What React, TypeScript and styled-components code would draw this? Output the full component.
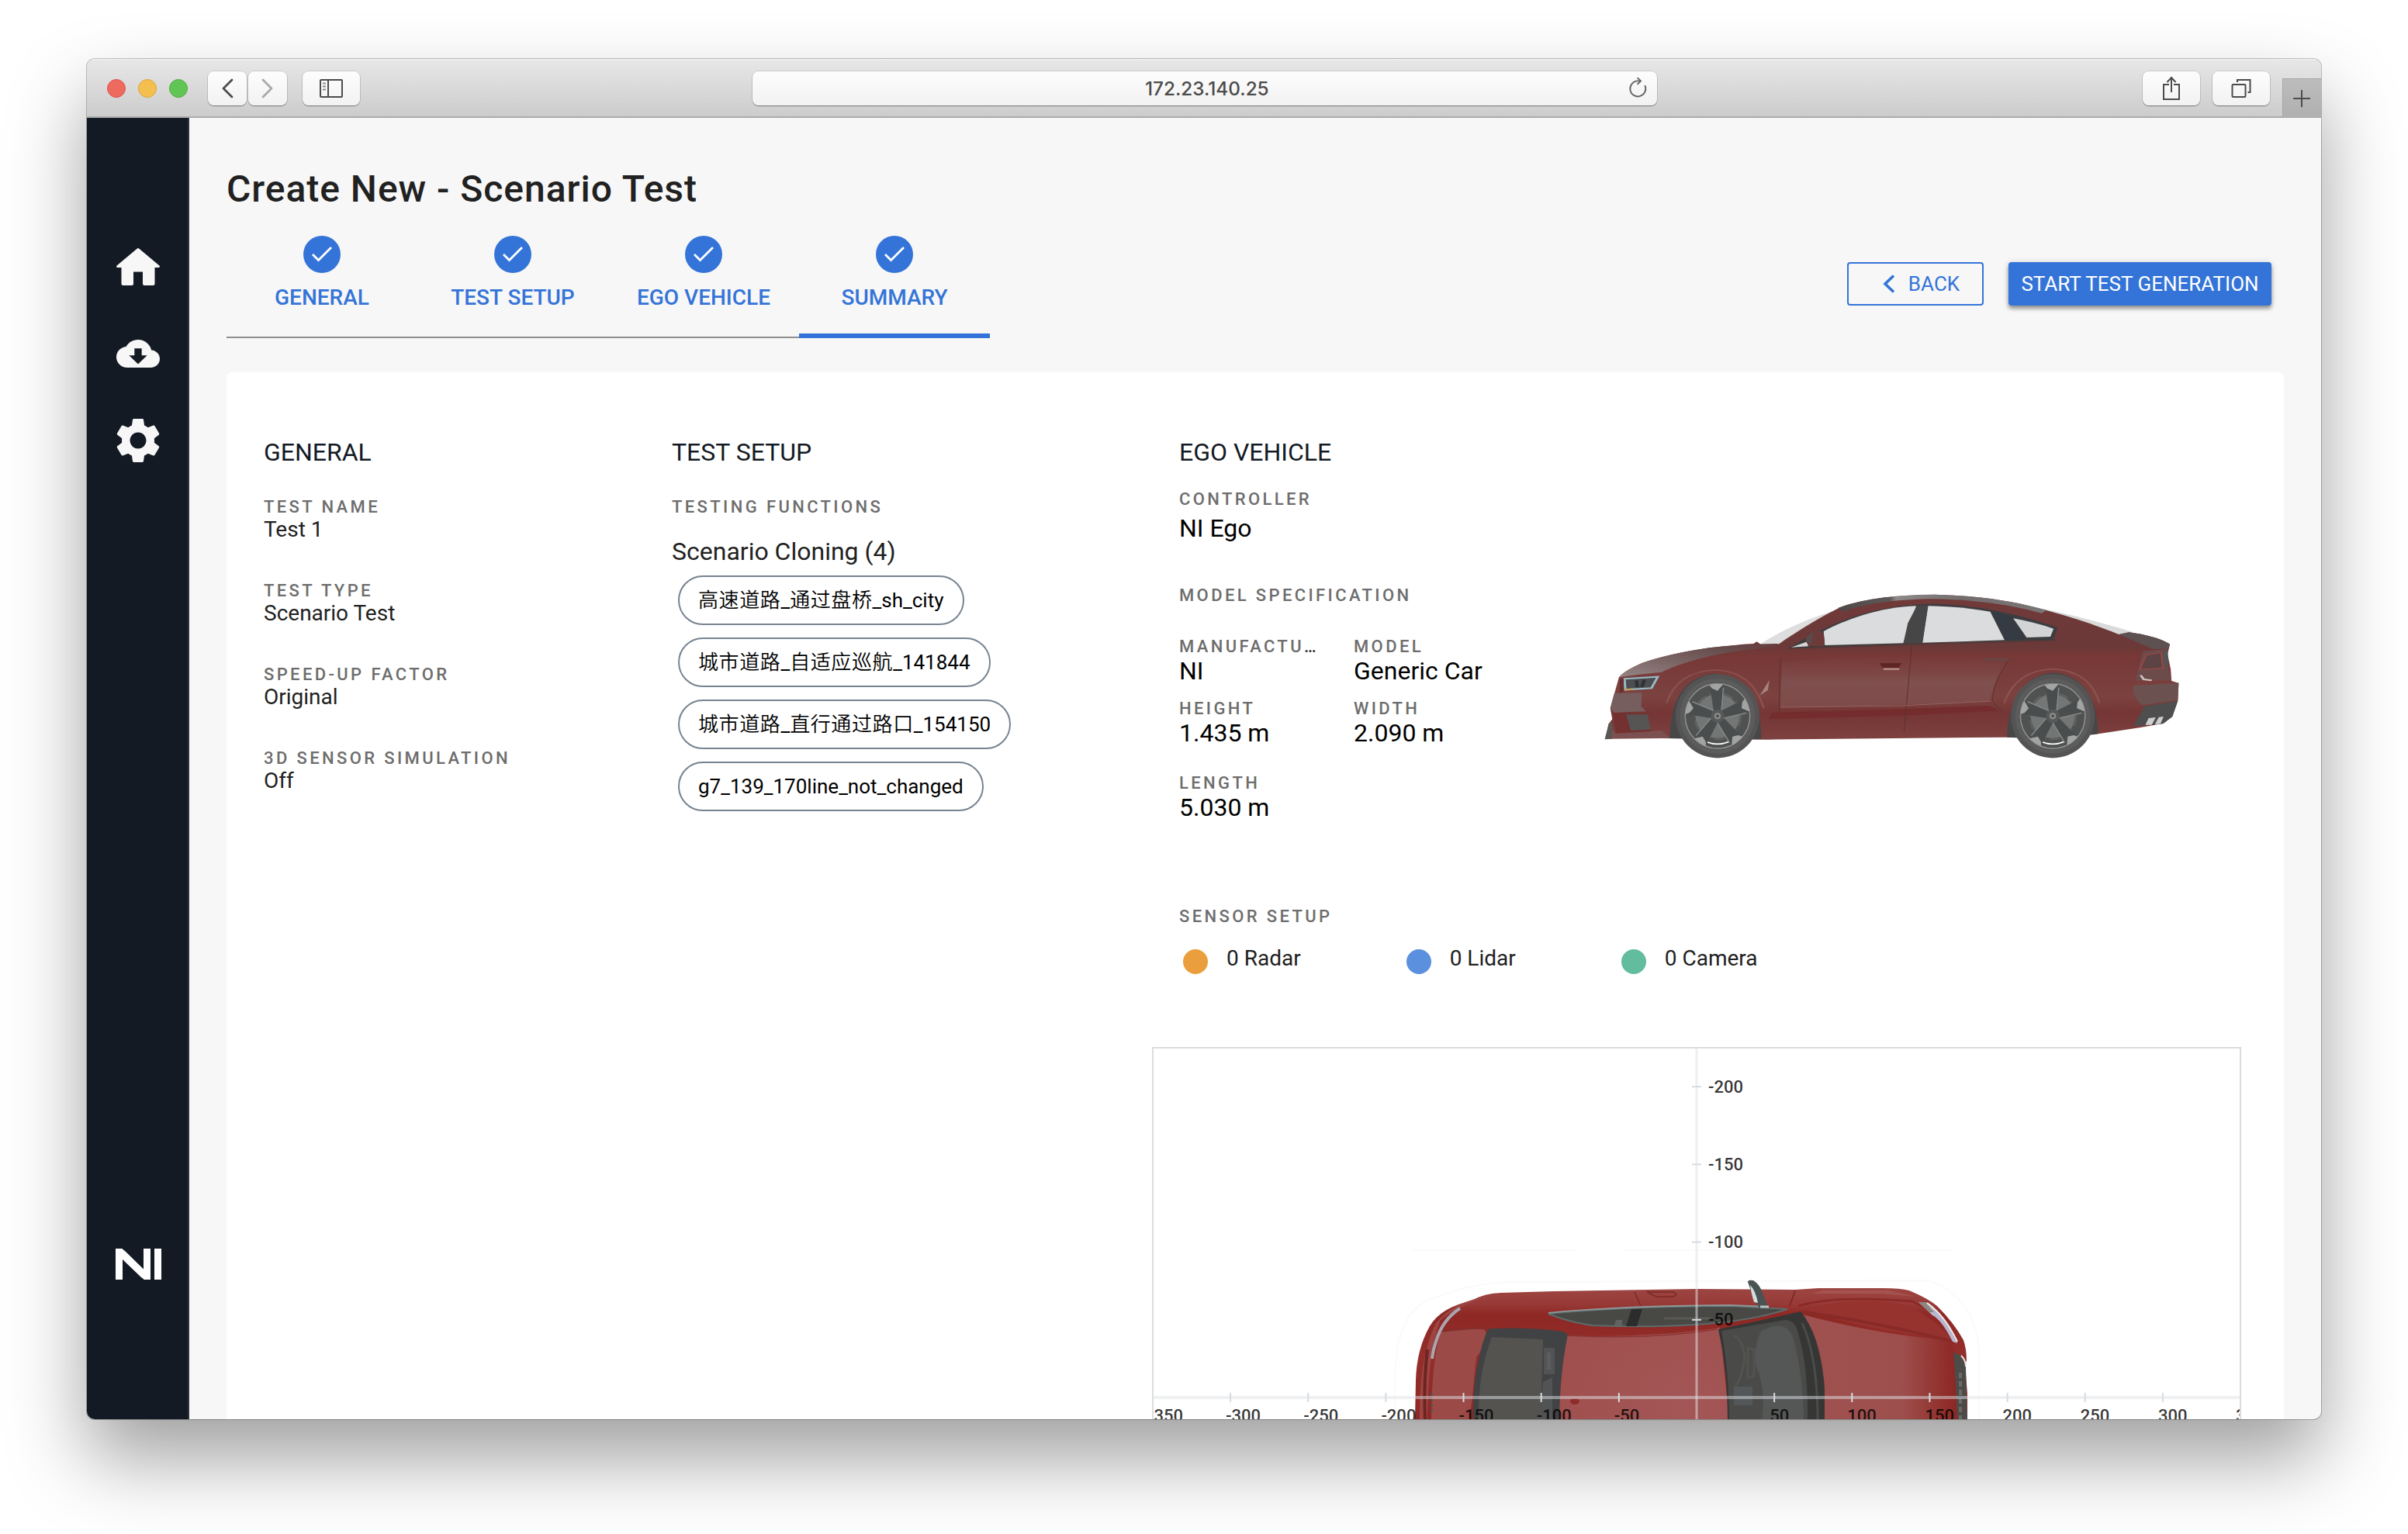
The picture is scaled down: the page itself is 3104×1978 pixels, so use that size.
import React from "react";
import styled, { createGlobalStyle } from "styled-components";

const BLUE = "#3474d8";
const NAVY = "#131a24";

const GlobalStyle = createGlobalStyle`
  * { box-sizing: border-box; }
  body {
    margin: 0;
    background: #fff;
    font-family: Roboto, "Noto Sans CJK SC", sans-serif;
    color: #212121;
  }
`;

const Desktop = styled.div`
  width: 3104px;
  height: 1978px;
  padding: 76px 112px 0;
  overflow: hidden;
`;

const Window = styled.div`
  display: flex;
  flex-direction: column;
  width: 2880px;
  height: 1754px;
  border-radius: 10px;
  overflow: hidden;
  background: #f7f7f7;
  box-shadow: 0 0 0 1px rgba(0, 0, 0, 0.24), 0 50px 100px rgba(0, 0, 0, 0.38);
`;

/* ---------- browser toolbar ---------- */

const Toolbar = styled.div`
  display: flex;
  align-items: flex-start;
  flex: none;
  height: 76px;
  padding: 15px 0 0 26px;
  background: linear-gradient(#e7e7e7, #cccccc);
  border-top: 1px solid #f4f4f4;
  border-bottom: 2px solid #a9a9a9;
`;

const Lights = styled.div`
  display: flex;
  gap: 16px;
  margin: 10px 26px 0 0;
`;

const Light = styled.span<{ $fill: string; $edge: string }>`
  width: 24px;
  height: 24px;
  border-radius: 50%;
  background: ${(p) => p.$fill};
  border: 1px solid ${(p) => p.$edge};
`;

const ToolButton = styled.button<{ $w: number; $gap: number }>`
  display: flex;
  align-items: center;
  justify-content: center;
  flex: none;
  width: ${(p) => p.$w}px;
  height: 44px;
  margin: 0 ${(p) => p.$gap}px 0 0;
  padding: 0;
  border: 0;
  border-radius: 8px;
  background: linear-gradient(#fdfdfd, #f2f2f2);
  box-shadow: 0 0 0 1px rgba(0, 0, 0, 0.1), 0 1px 1px rgba(0, 0, 0, 0.38);
`;

const AddressBar = styled.div`
  display: flex;
  align-items: center;
  justify-content: space-between;
  flex: none;
  width: 1166px;
  height: 44px;
  margin: 0 626px 0 506px;
  padding: 0 11px 0 506px;
  border-radius: 8px;
  background: linear-gradient(#fdfdfd, #f2f2f2);
  box-shadow: 0 0 0 1px rgba(0, 0, 0, 0.1), 0 1px 1px rgba(0, 0, 0, 0.38);
  color: #4b4b4b;
  font: 500 24.3px/46px Inter, sans-serif;
`;

const NewTab = styled.div`
  display: flex;
  align-items: center;
  justify-content: center;
  flex: none;
  width: 50px;
  height: 50px;
  margin-top: 9px;
  padding-right: 1px;
  background: linear-gradient(#bcbcbc, #b0b0b0);
  border: solid #a6a6a6;
  border-width: 1px 0 0 1px;
`;

/* ---------- application shell ---------- */

const Shell = styled.div`
  display: flex;
  flex: 1;
  min-height: 0;
`;

const Sidebar = styled.nav`
  display: flex;
  flex-direction: column;
  align-items: center;
  width: 132px;
  padding: 168px 0 180px 2px;
  background: ${NAVY};
  border-right: 2px solid #2d323d;
`;

const NavIcon = styled.svg<{ $h: number; $gap: number }>`
  display: block;
  flex: none;
  width: 56px;
  height: ${(p) => p.$h}px;
  margin-bottom: ${(p) => p.$gap}px;
  fill: #f7f7f7;
`;

const Logo = styled.svg`
  width: 59px;
  height: 40px;
  margin-top: auto;
  fill: #fff;
`;

const Main = styled.main`
  display: flex;
  flex-direction: column;
  flex: 1;
  padding: 64px 48px 0;
`;

const Title = styled.h1`
  margin: 0;
  font-size: 48px;
  line-height: 56px;
  font-weight: 500;
  letter-spacing: 0.97px;
`;

const Header = styled.div`
  display: flex;
  align-items: flex-start;
  justify-content: space-between;
  margin-top: 32px;
`;

const Stepper = styled.ol`
  display: flex;
  width: 984px;
  margin: 0;
  padding: 0;
  list-style: none;
`;

const Step = styled.li<{ $active?: boolean }>`
  display: flex;
  flex-direction: column;
  align-items: center;
  width: 246px;
  height: 132px;
  border-bottom: ${(p) => (p.$active ? `6px solid ${BLUE}` : "2px solid #8f8f8f")};
`;

const StepBadge = styled.span`
  display: flex;
  align-items: center;
  justify-content: center;
  width: 48px;
  height: 48px;
  border-radius: 50%;
  background: ${BLUE};
`;

const StepLabel = styled.span`
  margin-top: 16px;
  font-size: 28px;
  line-height: 32px;
  font-weight: 500;
  color: ${BLUE};
`;

const Actions = styled.div`
  display: flex;
  gap: 32px;
  margin: 34px 16px 0 0;
`;

const Button = styled.button<{ $solid?: boolean; $w: number }>`
  display: flex;
  align-items: center;
  justify-content: center;
  gap: 17px;
  width: ${(p) => p.$w}px;
  height: 56px;
  padding: ${(p) => (p.$solid ? "0" : "0 0 0 15px")};
  border: 2px solid ${BLUE};
  border-radius: 4px;
  background: ${(p) => (p.$solid ? BLUE : "transparent")};
  color: ${(p) => (p.$solid ? "#fff" : BLUE)};
  box-shadow: ${(p) => (p.$solid ? "0 4px 5px rgba(0, 0, 0, 0.34), 0 1px 8px rgba(0, 0, 0, 0.16)" : "none")};
  font: 400 26px/30px Roboto, sans-serif;
  white-space: nowrap;
`;

const Card = styled.section`
  display: grid;
  grid-template-columns: 526px 619px 1404px;
  flex: 1;
  margin-top: 44px;
  padding: 83px 0 0 48px;
  background: #fff;
  border-radius: 6px 6px 0 0;
`;

const Column = styled.div<{ $inset?: number }>`
  display: flex;
  flex-direction: column;
  padding-left: ${(p) => p.$inset ?? 0}px;
`;

const SectionTitle = styled.h2`
  margin: 0;
  font-size: 32px;
  line-height: 40px;
  font-weight: 400;
  color: ${NAVY};
`;

const Fields = styled.div`
  display: flex;
  flex-direction: column;
  gap: 51px;
  margin-top: 38px;
`;

const Caption = styled.div<{ $top?: number }>`
  margin-top: ${(p) => p.$top ?? 0}px;
  overflow: hidden;
  text-overflow: ellipsis;
  white-space: nowrap;
  font-size: 22px;
  line-height: 26px;
  font-weight: 500;
  letter-spacing: 3.38px;
  color: #1c1c1c;

  span {
    color: #6d6d6d;
  }
`;

const Value = styled.div`
  font-size: 28px;
  line-height: 31px;
`;

const GroupName = styled.div`
  margin-top: 24px;
  font-size: 32px;
  line-height: 40px;
`;

const Chips = styled.div`
  display: flex;
  flex-direction: column;
  align-items: flex-start;
  gap: 16px;
  margin: 11px 0 0 8px;
`;

const Chip = styled.span`
  height: 64px;
  padding: 0 24px;
  border: 2px solid #778391;
  border-radius: 32px;
  font-size: 26px;
  line-height: 60px;
  color: #000;
  white-space: nowrap;
`;

const Han = styled.span`
  font-weight: 350;
  letter-spacing: 0.6px;
`;

const VehicleRow = styled.div`
  display: flex;
  align-items: flex-start;
`;

const Specs = styled.div`
  width: 520px;
`;

const SpecValue = styled.div<{ $lh?: number }>`
  font-size: 32px;
  line-height: ${(p) => p.$lh ?? 36}px;
  color: #000;
`;

const SpecRow = styled.div<{ $top: number }>`
  display: grid;
  grid-template-columns: 225px 225px;
  margin-top: ${(p) => p.$top}px;
`;

const SpecCell = styled.div`
  padding-right: 40px;
  min-width: 0;
`;

const CarSide = styled.svg`
  display: block;
  flex: none;
  width: 800px;
  height: 260px;
  margin-top: 137px;
`;

const Sensors = styled.div`
  display: flex;
  gap: 136px;
  height: 36px;
  margin: 25px 0 94px 5px;
`;

const Sensor = styled.div`
  display: flex;
  gap: 24px;
  font-size: 28px;
  line-height: 32px;
  white-space: nowrap;
`;

const Dot = styled.span<{ $c: string }>`
  width: 32px;
  height: 32px;
  margin-top: 4px;
  border-radius: 50%;
  background: ${(p) => p.$c};
`;

const Chart = styled.svg`
  display: block;
  width: 1404px;
  height: 480px;
  border: solid #dbdddd;
  border-width: 2px 2px 0;
`;

/* ---------- drawings ---------- */

const WHEEL_ANGLES = [0, 72, 144, 216, 288];

function Wheel({ cx }: { cx: number }) {
  return (
    <g transform={`translate(${cx} 550) scale(1 1.53)`}>
      <circle r="106" fill="#545454" />
      <circle r="95" fill="#5c5c5c" />
      <circle r="85" fill="#505151" />
      <circle r="82" fill="none" stroke="#929292" strokeWidth="3" />
      <circle r="56" fill="#747575" />
      <circle r="58" fill="none" stroke="#5f6060" strokeWidth="6" strokeDasharray="26 10" />
      <path d="M-34 60Q0 78 34 60L28 67Q0 78-28 67Z" fill="#fff" />
      {WHEEL_ANGLES.map((a) => (
        <g key={a} transform={`rotate(${a})`}>
          <path d="M-9-8L-20-79Q-4-84 15-81L10-8Z" fill="#4a4d4d" />
          <path d="M-21-79Q-4-84 15-81L0-64L-14-70Z" fill="#a2a3a3" />
          <path d="M10-14L15-72" stroke="#868888" strokeWidth="3" />
        </g>
      ))}
      <circle r="17" fill="#585a5a" />
      <circle r="8" fill="#8d8e8e" />
      <circle r="4" fill="#505252" />
    </g>
  );
}

function SideView() {
  return (
    <CarSide viewBox="0 0 1568 780" preserveAspectRatio="none">
      <defs>
        <linearGradient id="paint" x1="0" y1="0" x2="0" y2="1">
          <stop offset="0" stopColor="#713a39" />
          <stop offset="0.36" stopColor="#6b3938" />
          <stop offset="0.42" stopColor="#773836" />
          <stop offset="0.7" stopColor="#7b4240" />
          <stop offset="0.82" stopColor="#753635" />
          <stop offset="1" stopColor="#7d4140" />
        </linearGradient>
        <linearGradient id="door" x1="0" y1="0" x2="0" y2="1">
          <stop offset="0" stopColor="#7b4241" stopOpacity="0.2" />
          <stop offset="0.5" stopColor="#7f504f" />
          <stop offset="1" stopColor="#7d4b4a" />
        </linearGradient>
        <linearGradient id="hood" x1="0" y1="1" x2="1" y2="0">
          <stop offset="0" stopColor="#958484" />
          <stop offset="0.4" stopColor="#7b6564" />
          <stop offset="0.75" stopColor="#664c4c" />
          <stop offset="1" stopColor="#693c3c" />
        </linearGradient>
        <linearGradient id="roof" x1="0" y1="0" x2="1" y2="0">
          <stop offset="0" stopColor="#4f4848" />
          <stop offset="0.25" stopColor="#5e5757" />
          <stop offset="0.28" stopColor="#8f8a8a" />
          <stop offset="0.6" stopColor="#736d6d" />
          <stop offset="1" stopColor="#7b7676" />
        </linearGradient>
      </defs>
      <path d="M448 272C500 222 570 170 650 136L664 148C600 185 550 225 500 275Z" fill="#dedede" />
      <path d="M1165 136C1240 160 1320 192 1392 226L1350 240C1290 205 1230 180 1160 152Z" fill="#dadada" />
      <path
        d="M58 638L66 580L75 562L70 520L80 465L92 400Q105 375 150 345Q220 308 320 286Q400 272 432 270L440 262L450 272L495 272C550 215 600 168 650 130C700 100 780 82 890 80C1000 84 1090 104 1170 140C1240 168 1310 205 1355 234L1380 226Q1450 240 1484 272L1478 310L1486 370L1488 414L1506 422L1504 490L1490 552L1468 578L1410 594L1290 622L1070 632L470 641L200 636Z"
        fill="url(#paint)"
      />
      <path d="M92 400Q105 375 150 345Q220 308 320 286Q400 272 495 270L488 282Q380 296 300 326Q230 355 200 380Q140 388 92 400Z" fill="url(#hood)" />
      <path d="M645 132C700 100 780 80 890 80C1000 84 1090 104 1172 140L1160 152C1080 118 990 100 890 97C790 98 710 115 662 146Z" fill="url(#roof)" />
      <path d="M1355 234L1380 226Q1450 240 1484 272L1478 290L1440 290Q1400 262 1355 234Z" fill="#5d5151" />
      <path d="M504 340Q650 318 828 324Q950 316 1078 330Q1040 400 1030 490Q900 508 500 516Z" fill="url(#door)" />
      <path d="M480 536L810 522L1020 510Q1040 512 1050 530L810 548L470 562Z" fill="#742d2c" />
      {/* glass */}
      <path d="M520 287Q560 250 605 216C680 160 770 118 890 116C1010 122 1110 160 1200 208L1190 254L860 268L640 280Z" fill="#3b3d40" />
      <path d="M609 222C660 180 750 128 843 124L812 268L612 276Z" fill="#dbdcde" />
      <path d="M873 124Q955 126 1030 146L1066 256L859 266Z" fill="#dbdcde" />
      <path d="M1088 172Q1145 188 1190 212L1182 243L1122 246Z" fill="#d3d4d6" />
      <path d="M1034 147L1084 166L1118 252L1070 256Z" fill="#343b43" />
      <path d="M845 122L873 122L858 268L810 270L822 190Z" fill="#464646" />
      <path d="M527 284L568 262L570 280Z" fill="#d5d5d5" />
      <path d="M563 258Q570 222 604 222Q614 240 610 280L572 280Z" fill="#6c3a39" />
      <path d="M563 258Q568 232 584 226L578 274Z" fill="#5a4a4a" />
      <path d="M520 288L860 272L1200 256" fill="none" stroke="#4f3a3a" strokeWidth="5" />
      {/* panel gaps and handles */}
      <path d="M500 330Q496 430 497 535M832 275Q822 440 812 612M1078 330Q1040 410 1035 490L1060 535" fill="none" stroke="#5d3231" strokeWidth="2" />
      <path d="M500 516L808 510L1032 492" fill="none" stroke="#936463" strokeWidth="3" />
      <path d="M750 345H806L798 364H758Z" fill="#5f2524" />
      <path d="M760 368H800" stroke="#b58f8f" strokeWidth="7" />
      <path d="M1015 332L1076 330" stroke="#6a4544" strokeWidth="12" />
      <path d="M448 470L472 410L468 450Z" fill="#a58483" />
      {/* front end */}
      <path d="M80 462L150 460L148 512L160 532L80 536L70 520Z" fill="#765e5e" />
      <path d="M78 540L160 536L175 612L84 616Z" fill="#733130" />
      <path d="M110 544L164 544L172 602L122 606Z" fill="#575454" />
      <path d="M84 618L200 606L222 636H62L70 590Z" fill="#7c5050" />
      <path d="M56 640L66 580L76 576L74 638Z" fill="#5b5656" />
      <path d="M106 406L190 398L174 442L108 448Z" fill="#4b4d50" stroke="#98bac5" strokeWidth="6" />
      <path d="M136 412L138 438M156 410L150 436" stroke="#2f3134" strokeWidth="9" />
      <path d="M94 408L104 406V452L94 462Z" fill="#682f2f" />
      <path d="M106 448L128 446" stroke="#c3a25f" strokeWidth="7" />
      {/* rear end */}
      <path d="M1415 300L1478 290L1480 370L1488 412L1396 412L1404 370Z" fill="#6c4b4b" />
      <path d="M1424 314L1462 304L1466 364L1408 370Z" fill="#5d4343" stroke="#984746" strokeWidth="4" />
      <path d="M1466 304L1478 296L1480 350L1468 356Z" fill="#555" />
      <path d="M1390 432L1506 422L1504 488L1412 508Q1392 480 1390 432Z" fill="#6b5251" />
      <path d="M1410 392L1418 408L1438 412" fill="none" stroke="#d0c4c4" strokeWidth="6" />
      <path d="M1420 512L1504 492L1490 552L1466 580L1392 588Z" fill="#4e4e4e" />
      <path d="M1430 558L1448 555L1438 584L1422 584ZM1456 554L1468 552L1460 580L1446 582Z" fill="#cfcfcf" />
      {/* wheels */}
      <path d="M220 636Q222 400 335 386Q450 400 452 640Z" fill="#474747" />
      <path d="M1072 632Q1078 400 1190 382Q1298 400 1303 618L1200 640Z" fill="#474747" />
      <path d="M212 500Q240 376 335 372Q430 376 458 520M1065 500Q1095 372 1190 368Q1282 376 1306 500" fill="none" stroke="#8b5250" strokeWidth="5" />
      <Wheel cx={341} />
      <Wheel cx={1188} />
    </CarSide>
  );
}

function TopView() {
  return (
    <g>
      <defs>
        <radialGradient id="roofTop" gradientUnits="userSpaceOnUse" cx="690" cy="470" r="330">
          <stop offset="0" stopColor="#a35656" />
          <stop offset="1" stopColor="#9c4a47" />
        </radialGradient>
        <linearGradient id="hoodTop" x1="0" y1="0" x2="1" y2="0">
          <stop offset="0" stopColor="#9f5150" />
          <stop offset="0.65" stopColor="#9d4f4d" />
          <stop offset="0.9" stopColor="#92322e" />
          <stop offset="1" stopColor="#8d2824" />
        </linearGradient>
        <linearGradient id="flank" x1="0" y1="0" x2="0" y2="1">
          <stop offset="0" stopColor="#9c4643" />
          <stop offset="0.12" stopColor="#983a37" />
          <stop offset="0.2" stopColor="#8e2824" />
          <stop offset="0.5" stopColor="#942e2a" />
          <stop offset="1" stopColor="#8e2824" />
        </linearGradient>
      </defs>
      <path d="M313 480V430Q314 340 360 325Q410 305 460 303L1000 301Q1060 320 1066 390V480M335 262H545M610 262H1030" fill="none" stroke="#fafafa" strokeWidth="2" />
      <path
        d="M339 480L340 430Q341 390 358 360Q372 336 412 327Q430 317 450 317L518 315L702 312L829 313L859 311H943Q965 311 976 314Q1000 324 1012 334Q1034 356 1046 378Q1050 390 1050 404L1048 410L1051 447V480Z"
        fill="url(#flank)"
      />
      <path d="M443 320Q400 330 372 352Q356 390 355 480H345Q344 400 366 356Q390 326 443 320Z" fill="#9c4542" />
      <path d="M372 367Q400 362 428 364L436 376L418 400L410 480H360Q360 410 372 367Z" fill="#9b4a47" />
      <path d="M372 367L424 362Q434 364 438 372" fill="none" stroke="#7e2f2d" strokeWidth="1.5" />
      <path d="M355 390Q350 430 352 480" fill="none" stroke="#6d2422" strokeWidth="4" />
      <path d="M360 446V474" stroke="#5a4a4c" strokeWidth="3" strokeDasharray="4 3" />
      {/* roof */}
      <path d="M520 372Q640 376 732 362L744 480H520Z" fill="url(#roofTop)" />
      <path d="M536 372Q640 378 728 364" fill="none" stroke="#8a3532" strokeWidth="1.5" />
      {/* hood and fender */}
      <path d="M838 345Q940 372 1030 378Q1038 400 1036 480H862Z" fill="url(#hoodTop)" />
      <path d="M842 338Q900 322 960 330Q1000 340 1032 378Q920 366 842 338Z" fill="#96332f" />
      <path d="M838 342Q920 352 1034 380" fill="none" stroke="#882a27" strokeWidth="4" />
      <path d="M833 334Q880 320 980 328L1000 338" fill="none" stroke="#8a2824" strokeWidth="2.5" />
      <path d="M864 314H950L984 322L940 318H850Z" fill="#a55350" />
      <path d="M829 314L822 334" stroke="#772622" strokeWidth="1.5" />
      <path d="M638 316H672Q680 320 670 322H650L638 316M622 316L630 334" fill="none" stroke="#7b2a28" strokeWidth="1.5" />
      {/* side glass */}
      <path d="M511 344Q600 335 745 334L819 338Q770 354 700 358Q640 362 567 359Q535 354 511 344Z" fill="#484845" stroke="#5c6b6b" strokeWidth="2" />
      <path d="M511 343Q600 334 745 333L795 335" fill="none" stroke="#8f9697" strokeWidth="1.8" />
      <path d="M618 338H632L625 360H611Z" fill="#2d2c2d" />
      <path d="M660 350H720" stroke="#5a5957" strokeWidth="3" />
      <path d="M598 352H606V359H596Z" fill="#636260" />
      {/* rear window */}
      <path d="M438 363Q490 361 530 367Q537 369 535 376Q526 420 525 480H414Q412 420 431 368Q433 363 438 363Z" fill="#414243" />
      <path d="M438 374L504 377L501 480H421Q420 420 438 374Z" fill="#545350" />
      <path d="M505 388H519V422H505ZM504 432L516 426V480H500Z" fill="#515354" />
      <path d="M509 394H514V416H509Z" fill="#5b5d5f" />
      <ellipse cx="545" cy="457" rx="6" ry="4" fill="#8f2c2a" />
      {/* windshield */}
      <path d="M730 364Q790 352 836 341Q862 372 867 440V480H742Q742 420 730 364Z" fill="#363735" />
      <path d="M734 366Q780 358 816 352Q828 352 832 366Q846 410 845 480H744Q744 420 734 366Z" fill="#4a4b48" />
      <path d="M786 366Q820 348 828 380Q840 430 840 480H786Q792 440 778 410Q776 380 786 366Z" fill="#555756" />
      <path d="M750 372Q762 378 764 400Q760 430 752 436M768 388L776 390V424L768 426Z" fill="none" stroke="#53524e" strokeWidth="3" />
      <path d="M750 438H774V462H750Z" fill="#545757" />
      <path d="M838 356Q858 400 858 480" fill="none" stroke="#4a4b4b" strokeWidth="3" />
      {/* mirror */}
      <path d="M768 303Q768 300 775 301Q784 306 788 320L795 337H783L774 320Z" fill="#4a5354" />
      <path d="M771 307Q778 314 781 330L776 329Q772 316 771 307Z" fill="#cfe0e0" />
      <path d="M784 335H795" stroke="#b9c4c4" strokeWidth="3" />
      {/* lights and grille */}
      <path d="M397 337Q374 352 366 380Q362 392 361 402" fill="none" stroke="#aaa5ae" strokeWidth="4" />
      <path d="M988 329H997Q1018 342 1027 360L1038 382L1032 380Q1018 352 1006 346Z" fill="#b9b7d0" />
      <path d="M988 329H997L1008 342L1002 342Z" fill="#8c8780" />
      <path d="M999 330Q1022 346 1038 380" fill="none" stroke="#f0ecec" strokeWidth="2" />
      <path d="M1033 394Q1046 396 1049 413L1051 480H1038Q1036 430 1033 394Z" fill="#4d4b48" />
      <path d="M1042 420V480" stroke="#6c6a66" strokeWidth="4" strokeDasharray="7 4" />
      <path d="M1043 398Q1049 404 1049 412" fill="none" stroke="#e6e2e0" strokeWidth="2" />
    </g>
  );
}

const X_LABELS = [-350, -300, -250, -200, -150, -100, -50, 50, 100, 150, 200, 250, 300, 350];
const Y_LABELS = [-200, -150, -100, -50];
const ORIGIN = { x: 702, y: 452 };
const UNIT = 2.003;

function SensorChart() {
  return (
    <Chart viewBox="2 2 1400 478">
      <TopView />
      <rect x="0" y={ORIGIN.y - 2} width="1404" height="4" fill="rgba(222,226,230,.5)" />
      <rect x={ORIGIN.x - 1.5} y="0" width="3" height="480" fill="rgba(222,226,230,.55)" />
      <g fontFamily="Roboto, sans-serif" fontSize="22" fontWeight="500" fill="rgba(0,0,0,.78)">
        {X_LABELS.map((v) => (
          <g key={v}>
            <rect x={ORIGIN.x + v * UNIT - 1} y={ORIGIN.y - 6} width="2" height="12" fill="#d7dbdf" />
            <text x={ORIGIN.x + v * UNIT - 6} y="483">{v}</text>
          </g>
        ))}
        {Y_LABELS.map((v) => (
          <g key={v}>
            <rect x={ORIGIN.x - 6} y={ORIGIN.y + v * 2.004 - 1} width="12" height="2" fill="#d7dbdf" />
            <text x={ORIGIN.x + 15} y={ORIGIN.y + v * 2.004 + 7.5}>{v}</text>
          </g>
        ))}
      </g>
    </Chart>
  );
}

/* ---------- data ---------- */

const STEPS = ["GENERAL", "TEST SETUP", "EGO VEHICLE", "SUMMARY"];

const GENERAL_FIELDS = [
  ["TEST NAME", "Test 1"],
  ["TEST TYPE", "Scenario Test"],
  ["SPEED-UP FACTOR", "Original"],
  ["3D SENSOR SIMULATION", "Off"],
];

const SCENARIOS = [
  "高速道路_通过盘桥_sh_city",
  "城市道路_自适应巡航_141844",
  "城市道路_直行通过路口_154150",
  "g7_139_170line_not_changed",
];

const SPEC_ROWS = [
  { top: 40, cells: [["MANUFACTURER", "NI"], ["MODEL", "Generic Car"]] },
  { top: 18, cells: [["HEIGHT", "1.435 m"], ["WIDTH", "2.090 m"]] },
  { top: 34, cells: [["LENGTH", "5.030 m"]] },
];

const SENSORS = [
  ["#eb9f3c", "0 Radar"],
  ["#5a90de", "0 Lidar"],
  ["#62bc9e", "0 Camera"],
];

/* Chinese runs are set a little lighter and wider than the Latin text around them. */
function ScenarioName({ name }: { name: string }) {
  return (
    <>
      {name.split(/([\u4e00-\u9fff]+)/).map((part, i) => (i % 2 ? <Han key={i}>{part}</Han> : part))}
    </>
  );
}

function BrowserBar() {
  return (
    <Toolbar>
      <Lights>
        <Light $fill="#ee6a5f" $edge="#dd5449" />
        <Light $fill="#f5bf4f" $edge="#dca53c" />
        <Light $fill="#61c555" $edge="#4eae43" />
      </Lights>
      <ToolButton $w={50} $gap={2}>
        <svg width="16" height="26" viewBox="0 0 16 26" fill="none" stroke="#4b4b4b" strokeWidth="2.8" strokeLinecap="round" strokeLinejoin="round"><path d="M14 2L3 13L14 24" /></svg>
      </ToolButton>
      <ToolButton $w={50} $gap={20}>
        <svg width="16" height="26" viewBox="0 0 16 26" fill="none" stroke="#a9a9a9" strokeWidth="2.8" strokeLinecap="round" strokeLinejoin="round"><path d="M2 2L13 13L2 24" /></svg>
      </ToolButton>
      <ToolButton $w={74} $gap={0}>
        <svg width="30" height="24" viewBox="0 0 30 24" fill="none" stroke="#4b4b4b" strokeWidth="2"><rect x="1" y="1" width="28" height="22" rx="1" /><path d="M11 1V23" /><path d="M4 5.5H8M4 9.5H8M4 13.5H8" stroke="#8a8a8a" /></svg>
      </ToolButton>
      <AddressBar>
        172.23.140.25
        <svg width="28" height="28" viewBox="0 0 28 28" fill="none" stroke="#666" strokeWidth="1.9"><path d="M23.4 10.2A10 10 0 1 1 14 4.4H17.5" /><path d="M13.5 0L18 4.4L13.5 8.8" /></svg>
      </AddressBar>
      <ToolButton $w={74} $gap={16}>
        <svg width="24" height="32" viewBox="0 0 24 32" fill="none" stroke="#4b4b4b" strokeWidth="2"><path d="M9 11H2V30H22V11H15" /><path d="M12 21V3M6.5 8L12 2L17.5 8" /></svg>
      </ToolButton>
      <ToolButton $w={74} $gap={16}>
        <svg width="26" height="26" viewBox="0 0 26 26" fill="none" stroke="#4b4b4b" strokeWidth="2"><rect x="1.5" y="8" width="17" height="16" rx="1" /><path d="M8 5V2H24.5V18H21.5" /></svg>
      </ToolButton>
      <NewTab>
        <svg width="22" height="22" viewBox="0 0 22 22" stroke="#4d4d4d" strokeWidth="2"><path d="M0 11H22M11 0V22" /></svg>
      </NewTab>
    </Toolbar>
  );
}

function SideNav() {
  return (
    <Sidebar>
      <NavIcon $h={48} $gap={70} viewBox="0 0 56 48">
        <path d="M26.5.7a2.2 2.2 0 0 1 3 0L55.4 22.6c1 1 .6 2.4-.8 2.4H49.5V46a2 2 0 0 1-2 2H36a2 2 0 0 1-2-2V30.5H22V46a2 2 0 0 1-2 2H8.5a2 2 0 0 1-2-2V25H1.4C0 25-.4 23.6.6 22.6Z" />
      </NavIcon>
      <NavIcon $h={36} $gap={66} viewBox="0 4 24 16" preserveAspectRatio="none">
        <path d="M19.35 10.04C18.67 6.59 15.64 4 12 4 9.11 4 6.6 5.64 5.35 8.04 2.34 8.36 0 10.91 0 14c0 3.31 2.69 6 6 6h13c2.76 0 5-2.24 5-5 0-2.64-2.05-4.78-4.65-4.96zM17 13l-5 5-5-5h3V9h4v4h3z" />
      </NavIcon>
      <NavIcon $h={56} $gap={0} viewBox="2.4 2.4 19.2 19.2">
        <path d="M19.14 12.94c.04-.3.06-.61.06-.94 0-.32-.02-.64-.07-.94l2.03-1.58c.18-.14.23-.41.12-.61l-1.92-3.32c-.12-.22-.37-.29-.59-.22l-2.39.96c-.5-.38-1.03-.7-1.62-.94L14.4 2.81c-.04-.24-.24-.41-.48-.41h-3.84c-.24 0-.43.17-.47.41L9.25 5.35C8.66 5.59 8.12 5.92 7.63 6.29L5.24 5.33c-.22-.08-.47 0-.59.22L2.74 8.87c-.12.21-.08.47.12.61l2.03 1.58c-.05.3-.09.63-.09.94s.02.64.07.94l-2.03 1.58c-.18.14-.23.41-.12.61l1.92 3.32c.12.22.37.29.59.22l2.39-.96c.5.38 1.03.7 1.62.94l.36 2.54c.05.24.24.41.48.41h3.84c.24 0 .44-.17.47-.41l.36-2.54c.59-.24 1.13-.56 1.62-.94l2.39.96c.22.08.47 0 .59-.22l1.92-3.32c.12-.22.07-.47-.12-.61L19.14 12.94zM12 15.6c-1.98 0-3.6-1.62-3.6-3.6s1.62-3.6 3.6-3.6 3.6 1.62 3.6 3.6-1.62 3.6-3.6 3.6z" />
      </NavIcon>
      <Logo viewBox="0 0 59 40">
        <rect width="9" height="40" />
        <rect x="36" width="9" height="40" />
        <rect x="50" width="9" height="40" />
        <path d="M0 0H4Q9 0 12 3L36 26.5L45 40H42Q36 40 33 37L9 14Z" />
      </Logo>
    </Sidebar>
  );
}

export default function App() {
  return (
    <Desktop>
      <GlobalStyle />
      <Window>
        <BrowserBar />
        <Shell>
          <SideNav />
          <Main>
            <Title>Create New - Scenario Test</Title>
            <Header>
              <Stepper>
                {STEPS.map((s) => (
                  <Step key={s} $active={s === "SUMMARY"}>
                    <StepBadge>
                      <svg width="28" height="22" viewBox="0 0 28 22" fill="none" stroke="#fff" strokeWidth="2.8"><path d="M2 11L9.5 18.5L26 2" /></svg>
                    </StepBadge>
                    <StepLabel>{s}</StepLabel>
                  </Step>
                ))}
              </Stepper>
              <Actions>
                <Button $w={176}>
                  <svg width="16" height="24" viewBox="0 0 16 24" fill="none" stroke={BLUE} strokeWidth="3.6"><path d="M14 1.5L3 12L14 22.5" /></svg>
                  BACK
                </Button>
                <Button $w={339} $solid>START TEST GENERATION</Button>
              </Actions>
            </Header>
            <Card>
              <Column>
                <SectionTitle>GENERAL</SectionTitle>
                <Fields>
                  {GENERAL_FIELDS.map(([label, value]) => (
                    <div key={label}>
                      <Caption><span>{label}</span></Caption>
                      <Value>{value}</Value>
                    </div>
                  ))}
                </Fields>
              </Column>
              <Column>
                <SectionTitle>TEST SETUP</SectionTitle>
                <Caption $top={38}><span>TESTING FUNCTIONS</span></Caption>
                <GroupName>Scenario Cloning (4)</GroupName>
                <Chips>
                  {SCENARIOS.map((s) => (
                    <Chip key={s}><ScenarioName name={s} /></Chip>
                  ))}
                </Chips>
              </Column>
              <Column>
                <Column $inset={35}>
                  <SectionTitle>EGO VEHICLE</SectionTitle>
                  <VehicleRow>
                    <Specs>
                      <Caption $top={28}><span>CONTROLLER</span></Caption>
                      <SpecValue $lh={48}>NI Ego</SpecValue>
                      <Caption $top={50}><span>MODEL SPECIFICATION</span></Caption>
                      {SPEC_ROWS.map((row) => (
                        <SpecRow key={row.top} $top={row.top}>
                          {row.cells.map(([label, value]) => (
                            <SpecCell key={label}>
                              <Caption><span>{label}</span></Caption>
                              <SpecValue>{value}</SpecValue>
                            </SpecCell>
                          ))}
                        </SpecRow>
                      ))}
                      <Caption $top={110}><span>SENSOR SETUP</span></Caption>
                    </Specs>
                    <SideView />
                  </VehicleRow>
                  <Sensors>
                    {SENSORS.map(([color, label]) => (
                      <Sensor key={label}>
                        <Dot $c={color} />
                        {label}
                      </Sensor>
                    ))}
                  </Sensors>
                </Column>
                <SensorChart />
              </Column>
            </Card>
          </Main>
        </Shell>
      </Window>
    </Desktop>
  );
}
